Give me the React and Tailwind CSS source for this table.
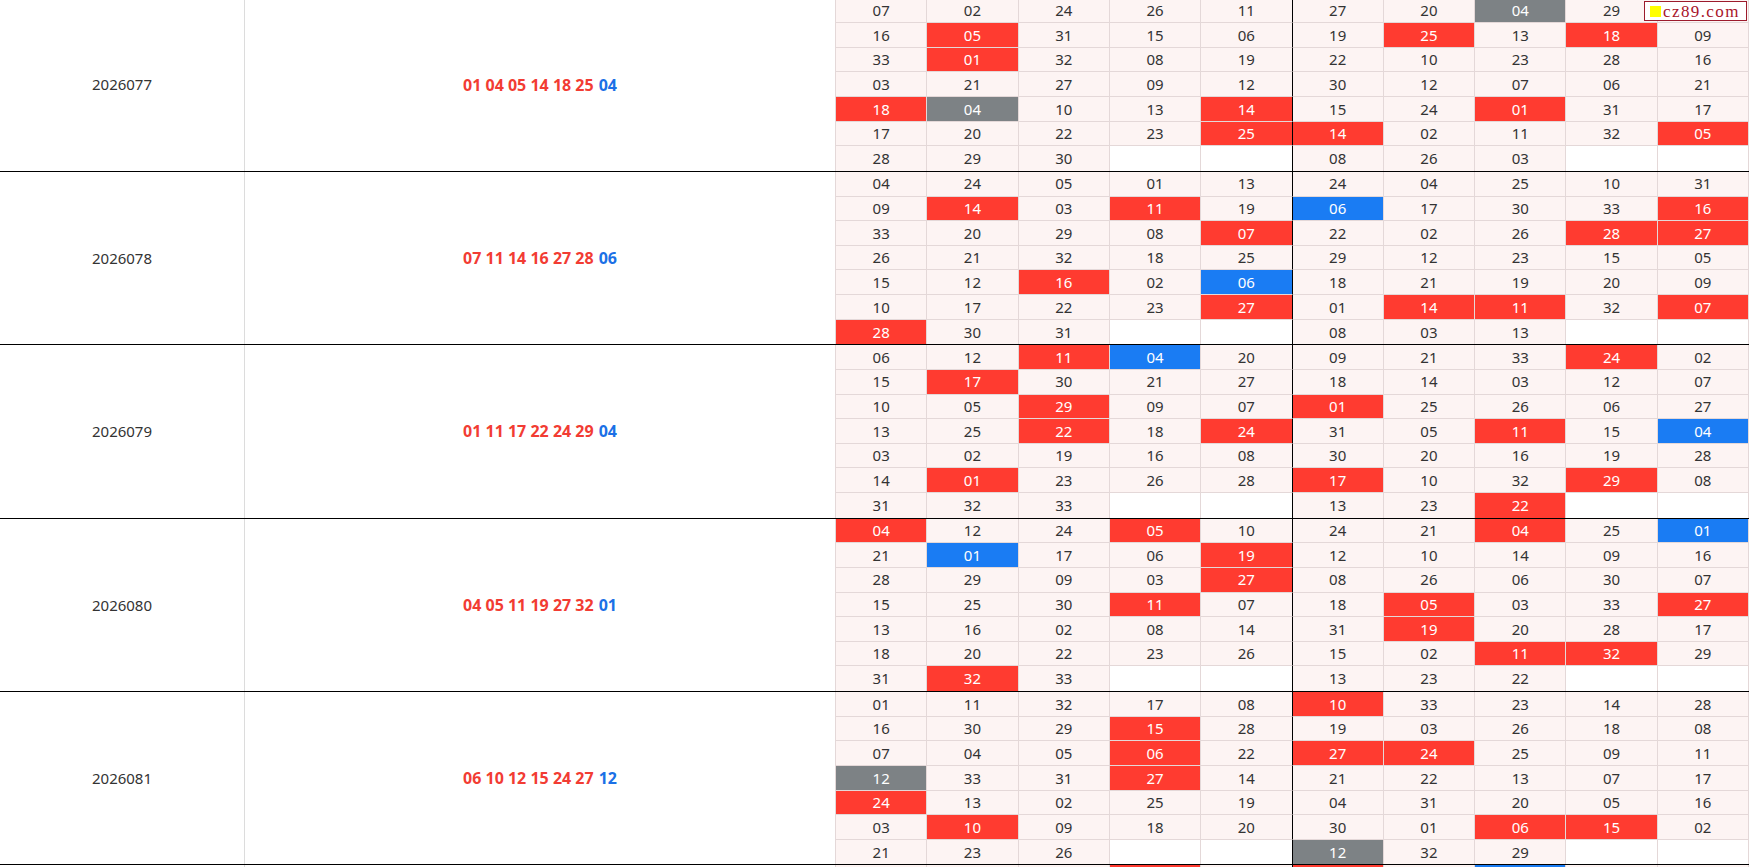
import React from 'react';

const groups = [
  {
    issue: '2026077',
    red: '01 04 05 14 18 25',
    blue: '04',
    rows: [
      ['07', '02', '24', '26', '11', '27', '20', '04g', '29', '-'],
      ['16', '05r', '31', '15', '06', '19', '25r', '13', '18r', '09'],
      ['33', '01r', '32', '08', '19', '22', '10', '23', '28', '16'],
      ['03', '21', '27', '09', '12', '30', '12', '07', '06', '21'],
      ['18r', '04g', '10', '13', '14r', '15', '24', '01r', '31', '17'],
      ['17', '20', '22', '23', '25r', '14r', '02', '11', '32', '05r'],
      ['28', '29', '30', '', '', '08', '26', '03', '', ''],
    ],
  },
  {
    issue: '2026078',
    red: '07 11 14 16 27 28',
    blue: '06',
    rows: [
      ['04', '24', '05', '01', '13', '24', '04', '25', '10', '31'],
      ['09', '14r', '03', '11r', '19', '06b', '17', '30', '33', '16r'],
      ['33', '20', '29', '08', '07r', '22', '02', '26', '28r', '27r'],
      ['26', '21', '32', '18', '25', '29', '12', '23', '15', '05'],
      ['15', '12', '16r', '02', '06b', '18', '21', '19', '20', '09'],
      ['10', '17', '22', '23', '27r', '01', '14r', '11r', '32', '07r'],
      ['28r', '30', '31', '', '', '08', '03', '13', '', ''],
    ],
  },
  {
    issue: '2026079',
    red: '01 11 17 22 24 29',
    blue: '04',
    rows: [
      ['06', '12', '11r', '04b', '20', '09', '21', '33', '24r', '02'],
      ['15', '17r', '30', '21', '27', '18', '14', '03', '12', '07'],
      ['10', '05', '29r', '09', '07', '01r', '25', '26', '06', '27'],
      ['13', '25', '22r', '18', '24r', '31', '05', '11r', '15', '04b'],
      ['03', '02', '19', '16', '08', '30', '20', '16', '19', '28'],
      ['14', '01r', '23', '26', '28', '17r', '10', '32', '29r', '08'],
      ['31', '32', '33', '', '', '13', '23', '22r', '', ''],
    ],
  },
  {
    issue: '2026080',
    red: '04 05 11 19 27 32',
    blue: '01',
    rows: [
      ['04r', '12', '24', '05r', '10', '24', '21', '04r', '25', '01b'],
      ['21', '01b', '17', '06', '19r', '12', '10', '14', '09', '16'],
      ['28', '29', '09', '03', '27r', '08', '26', '06', '30', '07'],
      ['15', '25', '30', '11r', '07', '18', '05r', '03', '33', '27r'],
      ['13', '16', '02', '08', '14', '31', '19r', '20', '28', '17'],
      ['18', '20', '22', '23', '26', '15', '02', '11r', '32r', '29'],
      ['31', '32r', '33', '', '', '13', '23', '22', '', ''],
    ],
  },
  {
    issue: '2026081',
    red: '06 10 12 15 24 27',
    blue: '12',
    rows: [
      ['01', '11', '32', '17', '08', '10r', '33', '23', '14', '28'],
      ['16', '30', '29', '15r', '28', '19', '03', '26', '18', '08'],
      ['07', '04', '05', '06r', '22', '27r', '24r', '25', '09', '11'],
      ['12g', '33', '31', '27r', '14', '21', '22', '13', '07', '17'],
      ['24r', '13', '02', '25', '19', '04', '31', '20', '05', '16'],
      ['03', '10r', '09', '18', '20', '30', '01', '06r', '15r', '02'],
      ['21', '23', '26', '', '', '12g', '32', '29', '', ''],
    ],
  },
];

// top edge of the next period, only a sliver shows
const nextRow = ['-', '-', '-', '-r', '-', '-r', '-', '-b', '-', '-'];

const border = 'border-[#e4d8d8]';

function toneOf(value) {
  const flag = value.slice(-1);
  if (value === '') return 'bg-white';
  if (flag === 'r') return 'bg-[#ff3b30] text-white';
  if (flag === 'b') return 'bg-[#1a7cf3] text-white';
  if (flag === 'g') return 'bg-[#7d8285] text-white';
  return 'bg-[#fdf4f3] text-[#333333]';
}

function Cell({ value, col, lastRow }) {
  const num = value.replace(/[rbg-]$/, '').replace('-', '');
  const right = col === 4 ? 'border-r-black' : 'border-r-[#e4d8d8]';
  const bottom = lastRow ? 'border-b-0' : 'border-b border-b-[#e4d8d8]';
  return (
    <div className={`flex items-center justify-center border-r ${right} ${bottom} ${toneOf(value)}`}>
      {num}
    </div>
  );
}

function Group({ g }) {
  return (
    <div className="flex h-[173.4px] shrink-0 border-b border-black">
      <div className="flex w-[245px] shrink-0 items-center justify-center border-r border-[#dcdcdc] text-[15px] text-[#333333]">
        {g.issue}
      </div>
      <div className={`flex flex-1 items-center justify-center border-r ${border} text-[16px] font-bold`}>
        <span className="text-[#f23c33]">{g.red}</span>
        <span className="ml-[5px] text-[#1b70e6]">{g.blue}</span>
      </div>
      <div className="grid w-[913px] shrink-0 grid-cols-10 grid-rows-7 text-[15px]">
        {g.rows.map((row, r) =>
          row.map((v, c) => <Cell key={`${r}-${c}`} value={v} col={c} lastRow={r === 6} />)
        )}
      </div>
    </div>
  );
}

export default function App() {
  return (
    <div
      className="relative h-[867px] w-[1749px] overflow-hidden bg-white"
      style={{ fontFamily: '"Noto Sans", "Open Sans", sans-serif' }}
    >
      <div className="-mt-[1.5px] flex flex-col">
        {groups.map((g) => (
          <Group key={g.issue} g={g} />
        ))}
        <div className="flex h-[24px] shrink-0">
          <div className="w-[245px] shrink-0 border-r border-[#dcdcdc]" />
          <div className={`flex-1 border-r ${border}`} />
          <div className="grid w-[913px] shrink-0 grid-cols-10">
            {nextRow.map((v, c) => (
              <div
                key={c}
                className={`border-r ${c === 4 ? 'border-r-black' : 'border-r-[#e4d8d8]'} ${toneOf(v)}`}
              />
            ))}
          </div>
        </div>
      </div>

      {/* site badge */}
      <div className="absolute right-[2px] top-[1px] flex h-[20px] w-[103px] items-center gap-[2px] border border-[#9c1b2c] bg-white pl-[5px]">
        <span className="h-[11px] w-[11px] bg-[#ffff00]" />
        <span
          className="text-[17px] leading-none tracking-[1.4px] text-[#a8142a]"
          style={{ fontFamily: '"Liberation Serif", serif' }}
        >
          cz89.com
        </span>
      </div>
    </div>
  );
}
